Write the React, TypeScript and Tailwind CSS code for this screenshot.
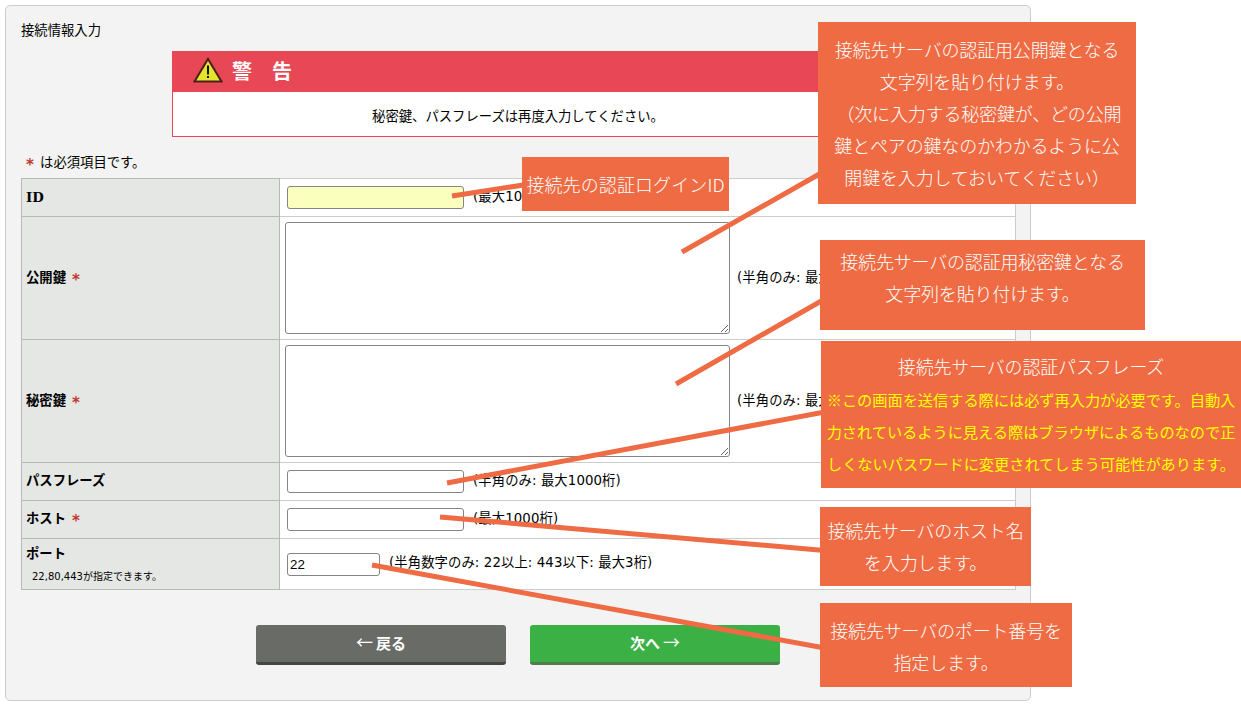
import * as React from "react";

const bodyFont = "font-['DejaVu_Sans','Noto_Sans_CJK_JP',sans-serif]";

const labelCell =
  "border border-[#b8b8b8] bg-[#e5e7e4] px-[4px] text-left align-middle text-[13.33px] font-bold text-black";
const valueCell = "border border-[#cccccc] bg-white pl-[7px] align-middle text-[13.33px] text-black";
const inputBase = "h-[23px] rounded-[3px] border border-[#858585] align-middle outline-none";

function Req(): React.JSX.Element {
  return <span className="ml-[6px] align-[-3px] text-[15px] leading-none font-bold text-[#c0392b]">*</span>;
}

function Hint({ children }: { children: React.ReactNode }): React.JSX.Element {
  return (
    <span className="ml-[9px] inline-block pb-[2px] align-middle tracking-[0.1px] whitespace-nowrap">
      {children}
    </span>
  );
}

function TextAreaRow({ label }: { label: string }): React.JSX.Element {
  return (
    <tr className="h-[123px]">
      <th className={labelCell}>
        {label}
        <Req />
      </th>
      <td className="border border-[#cccccc] bg-white pl-[5px] align-middle text-[13.33px] text-black">
        <div className="flex items-center">
          <textarea
            readOnly
            className="h-[112px] w-[445px] rounded-[3px] border border-[#858585] bg-white outline-none"
          />
          <span className="ml-[7px] tracking-[0.1px] whitespace-nowrap">(半角のみ: 最大1000桁)</span>
        </div>
      </td>
    </tr>
  );
}

function Callout({
  className,
  children
}: {
  className: string;
  children: React.ReactNode;
}): React.JSX.Element {
  return (
    <div
      className={`absolute bg-[#ee6b43] text-center text-[18px] leading-[32px] font-light tracking-[-0.17px] whitespace-nowrap text-white font-['Noto_Sans_CJK_JP',sans-serif] ${className}`}
    >
      {children}
    </div>
  );
}

function WarningIcon(): React.JSX.Element {
  return (
    <svg width="30" height="26" viewBox="0 0 30 26" className="mb-[4px] shrink-0">
      <path d="M15 2 L28.5 24.5 L1.5 24.5 Z" fill="#e2e52c" stroke="#4a1f1f" strokeWidth="2" strokeLinejoin="miter" />
      <rect x="14" y="8.5" width="2" height="9" fill="#111111" />
      <rect x="14" y="19" width="2" height="2" fill="#111111" />
    </svg>
  );
}

function ActionButton({
  className,
  children
}: {
  className: string;
  children: React.ReactNode;
}): React.JSX.Element {
  return (
    <button
      className={`h-[40px] w-[250px] rounded-[3px] border-b-[3px] pb-[4px] text-[15px] font-bold text-white font-['Noto_Sans_CJK_JP',sans-serif] ${className}`}
    >
      {children}
    </button>
  );
}

export default function App(): React.JSX.Element {
  return (
    <div className={`relative h-[710px] w-[1241px] overflow-hidden bg-white ${bodyFont}`}>
      <div className="absolute top-[5px] left-[5px] h-[696px] w-[1026px] rounded-[5px] border border-[#cccccc] bg-[#f3f3f3] px-[15px] pt-[16px]">
        <p className="text-[13.33px] leading-[18px] text-black">接続情報入力</p>

        <div className="mx-auto mt-[11px] w-[692px]">
          <div className="flex h-[41px] items-center gap-[9px] bg-[#e84855] pl-[21px]">
            <WarningIcon />
            <span className="text-[20px] leading-none font-bold text-white">警　告</span>
          </div>
          <p className="flex h-[45px] items-center justify-center border border-t-0 border-solid border-[#e84855] bg-white pt-[6px] text-[13.33px] text-black">
            秘密鍵、パスフレーズは再度入力してください。
          </p>
        </div>

        <p className="mt-[17px] mb-[6px] h-[18px] pl-[5px] text-[13.33px] leading-[18px] text-black">
          <span className="mr-[2px] align-[-3px] text-[15px] leading-none font-bold text-[#c0392b]">*</span> は必須項目です。
        </p>

        <table className="w-[995px] table-fixed border-collapse">
          <colgroup>
            <col className="w-[258px]" />
            <col />
          </colgroup>
          <tbody>
            <tr className="h-[38px]">
              <th className={`${labelCell} font-['DejaVu_Serif',serif]`}>ID</th>
              <td className={valueCell}>
                <input readOnly className={`${inputBase} w-[177px] bg-[#fbffbd]`} />
                <Hint>(最大1000桁)</Hint>
              </td>
            </tr>
            <TextAreaRow label="公開鍵" />
            <TextAreaRow label="秘密鍵" />
            <tr className="h-[38px]">
              <th className={`${labelCell} pb-[2px]`}>パスフレーズ</th>
              <td className={valueCell}>
                <input readOnly className={`${inputBase} w-[177px] bg-white`} />
                <Hint>(半角のみ: 最大1000桁)</Hint>
              </td>
            </tr>
            <tr className="h-[38px]">
              <th className={`${labelCell} pb-[2px]`}>
                ホスト
                <Req />
              </th>
              <td className={valueCell}>
                <input readOnly className={`${inputBase} w-[177px] bg-white`} />
                <Hint>(最大1000桁)</Hint>
              </td>
            </tr>
            <tr className="h-[51px]">
              <th className={labelCell}>
                ポート
                <div className="mt-[5px] pl-[6px] text-[10px] font-normal">22,80,443が指定できます。</div>
              </th>
              <td className={valueCell}>
                <input
                  readOnly
                  value="22"
                  className={`${inputBase} w-[93px] bg-white pl-[2px] text-[13.33px] font-['Liberation_Sans',sans-serif]`}
                />
                <Hint>(半角数字のみ: 22以上: 443以下: 最大3桁)</Hint>
              </td>
            </tr>
          </tbody>
        </table>

        <div className="mt-[35px] flex justify-center gap-[24px]">
          <ActionButton className="border-[#454545] bg-[#696c66]">
            <span className="mr-[3px] text-[17px] font-normal">←</span>戻る
          </ActionButton>
          <ActionButton className="border-[#4f7d4f] bg-[#3bb044]">
            次へ<span className="ml-[3px] text-[17px] font-normal">→</span>
          </ActionButton>
        </div>
      </div>

      {/* annotation lines drawn on top of the form */}
      <svg className="absolute inset-0" width="1241" height="710" viewBox="0 0 1241 710">
        <g stroke="#ee6b43" strokeWidth="5" fill="none">
          <line x1="452" y1="196" x2="530" y2="184" />
          <line x1="682" y1="252" x2="830" y2="168" />
          <line x1="676" y1="384" x2="830" y2="296" />
          <line x1="447" y1="483" x2="830" y2="411" />
          <line x1="440" y1="517" x2="830" y2="551" />
          <line x1="372" y1="565" x2="830" y2="649" />
        </g>
      </svg>

      <Callout className="top-[157px] left-[522px] flex h-[54px] w-[207px] items-center justify-center tracking-[0.1px]">
        接続先の認証ログインID
      </Callout>
      <Callout className="top-[22px] left-[818px] h-[182px] w-[318px] pt-[11px]">
        接続先サーバの認証用公開鍵となる
        <br />
        文字列を貼り付けます。
        <br />
        &nbsp;（次に入力する秘密鍵が、どの公開
        <br />
        鍵とペアの鍵なのかわかるように公
        <br />
        開鍵を入力しておいてください）
      </Callout>
      <Callout className="top-[240px] left-[820px] h-[90px] w-[325px] pt-[5px]">
        接続先サーバの認証用秘密鍵となる
        <br />
        文字列を貼り付けます。
      </Callout>
      <Callout className="top-[341px] left-[821px] h-[147px] w-[420px] pt-[9px]">
        接続先サーバの認証パスフレーズ
        <div className="mt-[1px] text-[15.2px] font-normal tracking-normal text-[#ffff00]">
          ※この画面を送信する際には必ず再入力が必要です。自動入
          <br />
          力されているように見える際はブラウザによるものなので正
          <br />
          しくないパスワードに変更されてしまう可能性があります。
        </div>
      </Callout>
      <Callout className="top-[507px] left-[820px] h-[79px] w-[211px] pt-[7px]">
        接続先サーバのホスト名
        <br />
        を入力します。
      </Callout>
      <Callout className="top-[603px] left-[820px] h-[84px] w-[252px] pt-[11px]">
        接続先サーバのポート番号を
        <br />
        指定します。
      </Callout>
    </div>
  );
}
